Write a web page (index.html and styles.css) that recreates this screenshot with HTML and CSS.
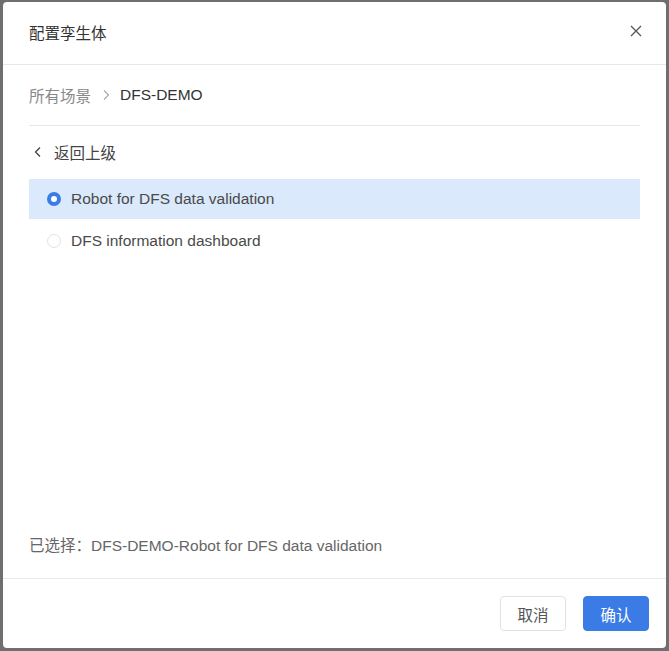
FILE: index.html
```html
<!DOCTYPE html>
<html lang="zh">
<head>
  <meta charset="UTF-8" />
  <title>配置孪生体</title>
  <link rel="stylesheet" href="styles.css">
</head>
<body>
  <div class="dialog">
    <header class="dialog-header">
      <h1>配置孪生体</h1>
      <button class="close" aria-label="关闭">
        <svg width="12" height="12" viewBox="0 0 12 12"><path d="M1 1L11 11M11 1L1 11" stroke="#555" stroke-width="1.3" fill="none"/></svg>
      </button>
    </header>

    <main class="dialog-body">
      <div class="breadcrumb">
        <span class="crumb">所有场景</span>
        <svg class="sep" width="8" height="12" viewBox="0 0 8 12"><path d="M2 1.5L6.5 6L2 10.5" stroke="#aaa" stroke-width="1.2" fill="none"/></svg>
        <span class="crumb current">DFS-DEMO</span>
      </div>

      <div class="back">
        <svg width="8" height="12" viewBox="0 0 8 12"><path d="M6 1.5L1.5 6L6 10.5" stroke="#444" stroke-width="1.3" fill="none"/></svg>
        <span>返回上级</span>
      </div>

      <ul class="options">
        <li class="option selected"><span class="radio"></span>Robot for DFS data validation</li>
        <li class="option"><span class="radio"></span>DFS information dashboard</li>
      </ul>

      <p class="chosen">已选择：DFS-DEMO-Robot for DFS data validation</p>
    </main>

    <footer class="dialog-footer">
      <button class="btn">取消</button>
      <button class="btn primary">确认</button>
    </footer>
  </div>
</body>
</html>
```

FILE: styles.css
```css
html, body {
  margin: 0;
  height: 100%;
}
body {
  background: #6f6f6f;
  padding: 2px 3px 3px 3px;
  box-sizing: border-box;
  font-family: "Liberation Sans", "Noto Sans CJK SC", sans-serif;
  font-size: 15.5px;
  color: #333;
}
.dialog {
  background: #fff;
  border-radius: 4px;
  height: 100%;
  display: flex;
  flex-direction: column;
}
.dialog-header {
  height: 63px;
  padding: 0 26px 2px 26px;
  box-sizing: border-box;
  display: flex;
  align-items: center;
  justify-content: space-between;
  border-bottom: 1px solid #e8e8e8;
}
.dialog-header h1 {
  margin: 0;
  font-size: 15.5px;
  font-weight: normal;
  color: #333;
}
.close {
  border: none;
  background: none;
  padding: 0;
  margin-right: -2px;
  margin-top: -3px;
  display: flex;
}
.dialog-body {
  flex: 1;
  padding: 0 26px;
  display: flex;
  flex-direction: column;
}
.breadcrumb {
  height: 61px;
  padding-bottom: 1px;
  box-sizing: border-box;
  display: flex;
  align-items: center;
  border-bottom: 1px solid #e6e6e6;
}
.crumb {
  color: #888;
}
.crumb.current {
  color: #333;
}
.sep {
  margin: 0 10px 0 11px;
}
.back {
  height: 53px;
  padding-bottom: 1px;
  box-sizing: border-box;
  display: flex;
  align-items: center;
  padding-left: 5px;
  color: #444;
}
.back svg {
  margin-right: 12px;
}
.options {
  list-style: none;
  margin: 0;
  padding: 0;
}
.option {
  height: 40px;
  margin-bottom: 2px;
  display: flex;
  align-items: center;
  padding-left: 18px;
  color: #4a4a4a;
}
.option.selected {
  background: #dae9fb;
}
.radio {
  width: 14px;
  height: 14px;
  box-sizing: border-box;
  border-radius: 50%;
  border: 1px solid #e2e2e2;
  background: #fff;
  margin-right: 10px;
}
.option.selected .radio {
  border: 4.5px solid #3b7be6;
}
.chosen {
  margin: auto 0 23px 0;
  color: #666;
}
.dialog-footer {
  height: 70px;
  border-top: 1px solid #e8e8e8;
  display: flex;
  justify-content: flex-end;
  align-items: flex-start;
  padding: 17px 17px 0 0;
  box-sizing: border-box;
  gap: 17px;
}
.btn {
  width: 66px;
  height: 35px;
  border: 1px solid #e2e2e2;
  border-radius: 4px;
  background: #fff;
  color: #555;
  font-family: "Liberation Sans", "Noto Sans CJK SC", sans-serif;
  font-size: 15.5px;
}
.btn.primary {
  background: #3b7be6;
  border-color: #3b7be6;
  color: #fff;
}
```
